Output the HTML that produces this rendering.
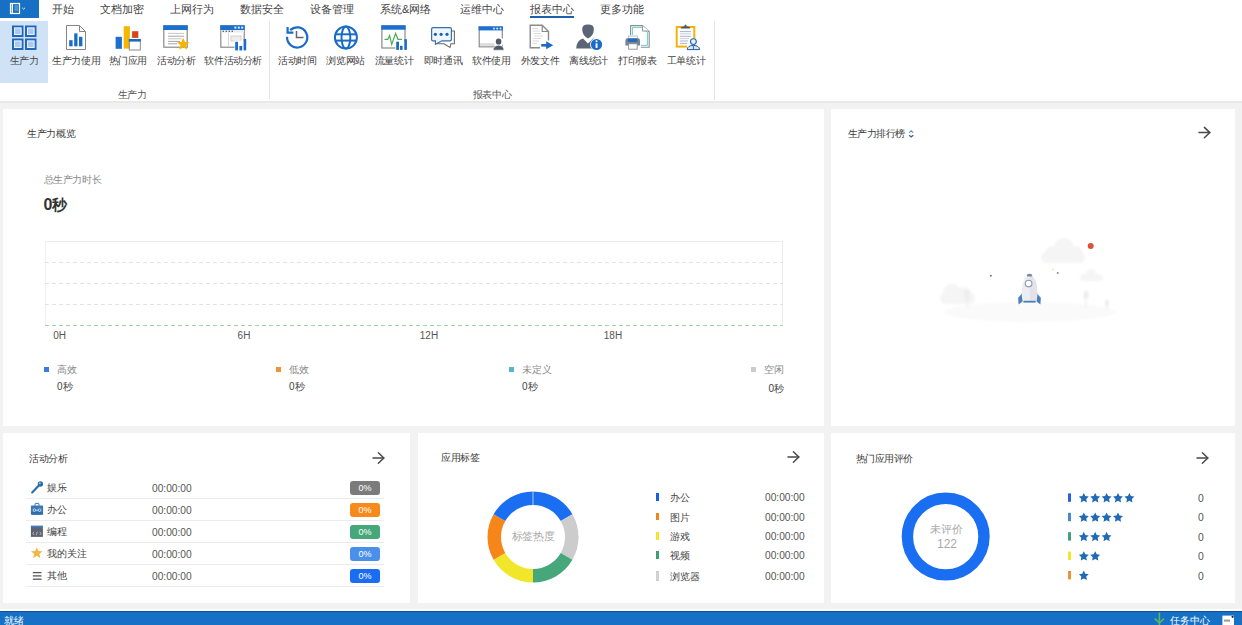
<!DOCTYPE html>
<html><head><meta charset="utf-8">
<style>
*{margin:0;padding:0;box-sizing:border-box}
html,body{width:1242px;height:625px;overflow:hidden;background:#f2f2f2;font-family:"Liberation Sans",sans-serif;color:#444}
.a{position:absolute}
.t{position:absolute;white-space:nowrap;line-height:1}
.c{text-align:center}
#top{position:absolute;left:0;top:0;width:1242px;height:103px;background:#fff;border-bottom:2px solid #e9e9e9}
.menu{font-size:11px;color:#444;top:4px}
.rl{font-size:10px;letter-spacing:-0.4px;color:#444;top:56px;width:100px;text-align:center}
.gl{font-size:10px;letter-spacing:-0.4px;color:#555;top:90px;width:100px;text-align:center}
.card{position:absolute;background:#fff}
.ttl{font-size:10px;color:#3c3c3c;letter-spacing:-0.3px}
.tm{font-family:"Liberation Sans",sans-serif;font-size:10.2px;color:#555}
.badge{position:absolute;left:350px;width:30px;height:14px;border-radius:3px;color:#fff;font-size:9px;line-height:14px;text-align:center}
.sep{position:absolute;left:26px;width:358px;height:1px;background:#ececec}
</style></head><body>
<div id="top">
  <div class="a" style="left:0;top:0;width:39px;height:18px;background:#1870c4"></div>
  <div class="a" style="left:0;top:21px;width:48px;height:62px;background:#cfe2f6"></div>
  <div class="t menu" style="left:52px">开始</div>
  <div class="t menu" style="left:100px">文档加密</div>
  <div class="t menu" style="left:170px">上网行为</div>
  <div class="t menu" style="left:240px">数据安全</div>
  <div class="t menu" style="left:310px">设备管理</div>
  <div class="t menu" style="left:380px">系统&amp;网络</div>
  <div class="t menu" style="left:460px">运维中心</div>
  <div class="t menu" style="left:530px">报表中心</div>
  <div class="t menu" style="left:600px">更多功能</div>
  <div class="a" style="left:530px;top:16px;width:44px;height:2px;background:#1f5fae"></div>

  <div class="a" style="left:269px;top:21px;width:1px;height:78px;background:#e4e4e4"></div>
  <div class="a" style="left:714px;top:21px;width:1px;height:79px;background:#e4e4e4"></div>

  <div class="t rl" style="left:-25.8px">生产力</div>
  <div class="t rl" style="left:26.2px">生产力使用</div>
  <div class="t rl" style="left:77.9px">热门应用</div>
  <div class="t rl" style="left:126.3px">活动分析</div>
  <div class="t rl" style="left:183.2px">软件活动分析</div>
  <div class="t rl" style="left:247.2px">活动时间</div>
  <div class="t rl" style="left:295.6px">浏览网站</div>
  <div class="t rl" style="left:344.1px">流量统计</div>
  <div class="t rl" style="left:393.1px">即时通讯</div>
  <div class="t rl" style="left:441.5px">软件使用</div>
  <div class="t rl" style="left:490px">外发文件</div>
  <div class="t rl" style="left:538.7px">离线统计</div>
  <div class="t rl" style="left:587.4px">打印报表</div>
  <div class="t rl" style="left:636px">工单统计</div>
  <div class="t gl" style="left:82px">生产力</div>
  <div class="t gl" style="left:442px">报表中心</div>
</div>


<svg class="a" style="left:0;top:0" width="1242" height="102" viewBox="0 0 1242 102">
 <!-- top-left app icon -->
 <g fill="none" stroke="#fff">
  <rect x="10.5" y="3.5" width="9" height="10" stroke-width="1.2"/>
  <line x1="12.3" y1="4" x2="12.3" y2="13" stroke-width="1.4"/>
  <line x1="14.5" y1="6" x2="18" y2="6" stroke-width="0.7" stroke-opacity="0.7"/>
  <line x1="14.5" y1="8" x2="18" y2="8" stroke-width="0.7" stroke-opacity="0.7"/>
  <line x1="14.5" y1="10" x2="18" y2="10" stroke-width="0.7" stroke-opacity="0.7"/>
  <polyline points="22.2,7.8 23.6,9.2 25,7.8" stroke-width="1" stroke-opacity="0.85"/>
 </g>
 <!-- grid icon -->
 <g stroke="#2368b8" stroke-width="2" fill="#a9c9ef">
  <rect x="13" y="26.5" width="9.5" height="9.5"/>
  <rect x="26" y="26.5" width="9.5" height="9.5"/>
  <rect x="13" y="39.5" width="9.5" height="9.5"/>
  <rect x="26" y="39.5" width="9.5" height="9.5"/>
 </g>
 <g stroke="#e6f2fd" stroke-width="1" fill="none">
  <rect x="14.5" y="28" width="6.5" height="6.5"/>
  <rect x="27.5" y="28" width="6.5" height="6.5"/>
  <rect x="14.5" y="41" width="6.5" height="6.5"/>
  <rect x="27.5" y="41" width="6.5" height="6.5"/>
 </g>
 <!-- productivity use doc -->
 <path d="M66.5,25.5 H79.5 L85.5,31.5 V49.5 H66.5 Z" fill="#fff" stroke="#858585" stroke-width="1"/>
 <path d="M79.5,25.5 V31.5 H85.5" fill="none" stroke="#858585" stroke-width="1"/>
 <g fill="#1a6bc4">
  <rect x="69.2" y="40.2" width="3.4" height="6.1"/>
  <rect x="74.2" y="33.4" width="3.3" height="12.9"/>
  <rect x="79" y="36.8" width="3.4" height="9.5"/>
 </g>
 <!-- hot apps -->
 <rect x="115.6" y="36.8" width="6.3" height="12" fill="#1a70cc"/>
 <rect x="123.7" y="26.2" width="6.2" height="22.4" fill="#f5b800"/>
 <rect x="132.1" y="31.2" width="6.2" height="6.7" fill="#d9421a"/>
 <rect x="129.3" y="39.5" width="11" height="10.5" fill="#fff" stroke="#8a8a8a" stroke-width="1"/>
 <rect x="128.8" y="39" width="12" height="2.6" fill="#1a6bc8"/>
 <!-- activity analysis -->
 <rect x="163.8" y="25.8" width="23.4" height="21.4" fill="#fff" stroke="#8a8a8a" stroke-width="1.2"/>
 <rect x="163.3" y="25.3" width="24.4" height="4.7" fill="#1a6fd0"/>
 <g stroke="#9a9a9a" stroke-width="0.9">
  <line x1="168" y1="33.4" x2="184" y2="33.4" stroke="#c0c0c0"/>
  <line x1="168" y1="36.2" x2="184" y2="36.2"/>
  <line x1="168" y1="38.8" x2="182" y2="38.8" stroke="#c0c0c0"/>
  <line x1="168" y1="41.4" x2="180" y2="41.4"/>
  <line x1="168" y1="43.8" x2="177" y2="43.8"/>
 </g>
 <path d="M183.2,37.8 L185,42 L189.4,42.2 L186,45.2 L187.1,49.8 L183.2,47.3 L179.3,49.8 L180.4,45.2 L177,42.2 L181.4,42 Z" fill="#f5b400"/>
 <!-- software activity analysis -->
 <rect x="220.8" y="25.8" width="23.4" height="21.4" fill="#fff" stroke="#8a8a8a" stroke-width="1.2"/>
 <rect x="220.3" y="25.3" width="24.4" height="4.7" fill="#1a6fd0"/>
 <g fill="#d8ecfb"><rect x="234.4" y="26.6" width="2" height="2"/><rect x="237.8" y="26.6" width="2" height="2"/><rect x="241.2" y="26.6" width="2" height="2"/></g>
 <rect x="221.4" y="30" width="22.4" height="2.6" fill="#ececec"/>
 <g fill="#666"><rect x="222.6" y="30.6" width="1.4" height="1.4"/><rect x="225.6" y="30.6" width="1.4" height="1.4"/><rect x="228.6" y="30.6" width="1.4" height="1.4"/><rect x="231.6" y="30.6" width="1.4" height="1.4"/></g>
 <line x1="228.5" y1="32.6" x2="228.5" y2="46.8" stroke="#d8d8d8" stroke-width="1"/>
 <rect x="231" y="36" width="10" height="5" fill="#eee" stroke="#d8c0c8" stroke-width="0.8"/>
 <rect x="234.6" y="40.6" width="13" height="10" fill="#fff"/>
 <g fill="#1a6bc8">
  <rect x="235.2" y="41.8" width="2.8" height="8.6"/>
  <rect x="239.4" y="46" width="2.8" height="4.4"/>
  <rect x="243.6" y="39" width="2.6" height="11.4"/>
 </g>
 <!-- activity time (clock) -->
 <path d="M287.1,36.8 A10.1,10.1 0 1 0 290.2,30.1" fill="none" stroke="#1a6bc8" stroke-width="2.2"/>
 <path d="M287.6,27 V32.6 H293.4" fill="none" stroke="#1a6bc8" stroke-width="2.2"/>
 <path d="M296.5,31 V37.5 H303.5" fill="none" stroke="#5f6676" stroke-width="1.5"/>
 <!-- globe -->
 <g fill="none" stroke="#1a6bc8" stroke-width="2">
  <circle cx="345.9" cy="37.6" r="11"/>
  <ellipse cx="345.9" cy="37.6" rx="4.4" ry="11"/>
  <line x1="335" y1="34.3" x2="356.8" y2="34.3"/>
  <line x1="335" y1="40.6" x2="356.8" y2="40.6"/>
 </g>
 <!-- traffic stats -->
 <rect x="381.9" y="25.9" width="23.1" height="22.1" fill="#fff" stroke="#8a8a8a" stroke-width="1.2"/>
 <rect x="381.3" y="25.3" width="24.3" height="4.4" fill="#1a6fd0"/>
 <polyline points="384.5,39.3 387.8,39.3 389.6,35.6 391.7,44.4 395.6,33.5 398,39.3 402,39.3" fill="none" stroke="#4caf50" stroke-width="1.2"/>
 <rect x="395.4" y="41" width="12.4" height="9.6" fill="#fff"/>
 <g fill="#1a6bc8">
  <rect x="396.2" y="41.7" width="2.8" height="8.2"/>
  <rect x="400" y="45.8" width="2.6" height="4.1"/>
  <rect x="404.3" y="39.2" width="2.6" height="10.7"/>
 </g>
 <!-- instant messaging -->
 <path d="M452,31 H454.4 V43.8 H451 L450,47.5 L444,43.8 H437" fill="#fff" stroke="#6a6a6a" stroke-width="1.1"/>
 <path d="M433,27.6 H450 Q451.4,27.6 451.4,29 V39.4 Q451.4,40.8 450,40.8 H442 L435.4,44.2 V40.8 H433 Q431.6,40.8 431.6,39.4 V29 Q431.6,27.6 433,27.6 Z" fill="#eef6fd" stroke="#3a6ea8" stroke-width="1.2"/>
 <g fill="#1a5fb0"><circle cx="435.4" cy="34.3" r="1.6"/><circle cx="441.1" cy="34.3" r="1.6"/><circle cx="447" cy="34.3" r="1.6"/></g>
 <!-- software use -->
 <rect x="479.2" y="27" width="23.1" height="19.8" fill="#fff" stroke="#8a8a8a" stroke-width="1.2"/>
 <rect x="478.6" y="26.4" width="24.3" height="4" fill="#1a6fd0"/>
 <g fill="#d8ecfb"><circle cx="494" cy="28.4" r="1"/><circle cx="497.2" cy="28.4" r="1"/><circle cx="500.5" cy="28.4" r="1"/></g>
 <rect x="480" y="43" width="15" height="3.2" fill="#dedede"/>
 <circle cx="498.6" cy="41.6" r="5.2" fill="#fff"/>
 <ellipse cx="498.6" cy="41.6" rx="2.8" ry="3.2" fill="#4f5a66"/>
 <path d="M493.2,50.2 Q493.4,45.6 498.6,45.2 Q503.8,45.6 504,50.2 Z" fill="#4f5a66" stroke="#fff" stroke-width="0.6"/>
 <!-- outgoing files -->
 <path d="M530.2,25.2 H542.2 L548.5,31.5 V47.8 H530.2 Z" fill="#fff" stroke="#8a8a8a" stroke-width="1.4"/>
 <path d="M542.2,25.2 V31.5 H548.5" fill="none" stroke="#8a8a8a" stroke-width="1.2"/>
 <g stroke="#d0d0d0" stroke-width="0.8"><line x1="532.5" y1="28.5" x2="538" y2="28.5"/><line x1="532.5" y1="31" x2="540" y2="31"/><line x1="533.5" y1="33.5" x2="541" y2="33.5"/><line x1="534" y1="36" x2="543" y2="36"/><line x1="533" y1="38.5" x2="541" y2="38.5"/><line x1="532.5" y1="41" x2="539" y2="41"/><line x1="532.5" y1="43.5" x2="537" y2="43.5"/></g>
 <rect x="540" y="40.5" width="14" height="9" fill="#fff"/>
 <line x1="541.2" y1="45.3" x2="550.5" y2="45.3" stroke="#1a6bc8" stroke-width="2.6"/>
 <path d="M546.2,41.3 L553.2,45.3 L546.2,49.3 Z" fill="#1a6bc8"/>
 <!-- offline stats -->
 <path d="M582.2,29 Q582.2,24.6 588,24.6 Q593.9,24.6 593.9,29 Q593.9,35.6 588,38.4 Q582.2,35.6 582.2,29 Z" fill="#5a6577"/>
 <path d="M576.2,48.4 Q576.6,40.6 583,38.6 L588,43.6 L593,38.6 Q596,39.6 597.6,42 L597.6,48.4 Z" fill="#5a6577"/>
 <circle cx="596.5" cy="44.5" r="6.4" fill="#fff"/>
 <circle cx="596.5" cy="44.5" r="5.6" fill="#1a6bc8"/>
 <rect x="595.6" y="43.3" width="1.9" height="4.6" fill="#fff"/>
 <circle cx="596.55" cy="41.2" r="1.05" fill="#fff"/>
 <!-- print report -->
 <path d="M630.6,25.6 H642.4 L649.2,31.6 V47.2 H630.6 Z" fill="#fff" stroke="#8a8f98" stroke-width="1.1"/>
 <path d="M632.4,27.4 H641.6 L647.4,32.4 V45.4 H632.4 Z" fill="none" stroke="#62d2c4" stroke-width="1"/>
 <path d="M642.4,25.6 V31 H649" fill="#fff" stroke="#8a8f98" stroke-width="1"/>
 <rect x="624.4" y="35.2" width="16.4" height="15" fill="#fff"/>
 <rect x="628.6" y="36" width="8.8" height="3" fill="#f6f6f6" stroke="#9aa" stroke-width="0.6"/>
 <path d="M625.4,40.4 Q625.4,38.2 627.6,38.2 H638 Q640,38.2 640,40.4 V45.4 H625.4 Z" fill="#7a8290"/>
 <rect x="627.8" y="38.6" width="9.6" height="3.2" fill="#1a6bc8"/>
 <rect x="628.6" y="43.8" width="8.6" height="5.4" fill="#fff" stroke="#8a8f98" stroke-width="0.9"/>
 <!-- work order stats -->
 <rect x="676.7" y="27" width="17.6" height="19.6" fill="#fff" stroke="#f5b20a" stroke-width="2"/>
 <path d="M680.5,28.5 Q680.8,26.6 683,26.6 H684.2 Q684.6,24.4 685.5,24.4 Q686.4,24.4 686.8,26.6 H688 Q690.2,26.6 690.2,28.5 Z" fill="#505868"/>
 <g stroke="#8890b0" stroke-width="0.7">
  <line x1="680" y1="31.6" x2="691" y2="31.6"/><line x1="680" y1="33.8" x2="691" y2="33.8" stroke="#b0b8d0"/>
  <line x1="680" y1="36.3" x2="691" y2="36.3"/><line x1="680" y1="38.6" x2="689" y2="38.6" stroke="#b0b8d0"/>
  <line x1="680" y1="41" x2="688" y2="41"/><line x1="680" y1="43.4" x2="688" y2="43.4"/>
 </g>
 <circle cx="693.4" cy="45" r="6.6" fill="#fff"/>
 <path d="M687.2,49.6 Q687.4,45.6 693.4,45.4 Q699.4,45.6 699.6,49.6 Z" fill="#d6ecfa" stroke="#2a5c9a" stroke-width="1"/>
 <line x1="693.4" y1="45.6" x2="693.4" y2="49.4" stroke="#2a6bc0" stroke-width="1"/>
 <circle cx="693.4" cy="41.6" r="2.9" fill="#e6f4fd" stroke="#1f64b8" stroke-width="1.1"/>
</svg>

<!-- cards -->
<div class="card" style="left:3px;top:109px;width:821px;height:317px"></div>
<div class="card" style="left:831px;top:109px;width:404px;height:317px"></div>
<div class="card" style="left:3px;top:433px;width:407px;height:170px"></div>
<div class="card" style="left:418px;top:433px;width:406px;height:170px"></div>
<div class="card" style="left:831px;top:433px;width:404px;height:170px"></div>


<!-- card1 content -->
<div class="t ttl" style="left:27px;top:129px">生产力概览</div>
<div class="t" style="left:43.5px;top:175px;font-size:10px;color:#888;letter-spacing:-0.35px">总生产力时长</div>
<div class="t" style="left:43.5px;top:197px;font-size:16px;font-weight:bold;color:#333">0<span style="font-size:15px;position:relative;top:-0.5px">秒</span></div>
<svg class="a" style="left:0;top:230px" width="830" height="100" viewBox="0 230 830 100">
 <line x1="45" y1="241.5" x2="783" y2="241.5" stroke="#ececec" stroke-width="1"/>
 <line x1="45.5" y1="241" x2="45.5" y2="325" stroke="#f0f0f0" stroke-width="1"/>
 <line x1="782.5" y1="241" x2="782.5" y2="325" stroke="#ececec" stroke-width="1"/>
 <g stroke="#e2e2e2" stroke-width="1" stroke-dasharray="4,3">
  <line x1="45" y1="262.5" x2="783" y2="262.5"/>
  <line x1="45" y1="283.5" x2="783" y2="283.5"/>
  <line x1="45" y1="304.5" x2="783" y2="304.5"/>
 </g>
 <line x1="45" y1="325.5" x2="783" y2="325.5" stroke="#9fd49f" stroke-width="1.2" stroke-dasharray="4,3"/>
</svg>
<div class="t c" style="left:9.7px;top:331px;width:100px;font-size:10px;color:#555">0H</div>
<div class="t c" style="left:194px;top:331px;width:100px;font-size:10px;color:#555">6H</div>
<div class="t c" style="left:379px;top:331px;width:100px;font-size:10px;color:#555">12H</div>
<div class="t c" style="left:563px;top:331px;width:100px;font-size:10px;color:#555">18H</div>
<div class="a" style="left:44px;top:367px;width:5px;height:5px;background:#3b7ddd"></div>
<div class="a" style="left:276px;top:367px;width:5px;height:5px;background:#f0923a"></div>
<div class="a" style="left:509px;top:367px;width:5px;height:5px;background:#5ab4cc"></div>
<div class="a" style="left:751px;top:367px;width:5px;height:5px;background:#cccccc"></div>
<div class="t" style="left:57px;top:365px;font-size:10px;color:#888">高效</div>
<div class="t" style="left:289px;top:365px;font-size:10px;color:#888">低效</div>
<div class="t" style="left:522px;top:365px;font-size:10px;color:#888">未定义</div>
<div class="t" style="left:764px;top:365px;font-size:10px;color:#888">空闲</div>
<div class="t" style="left:57px;top:382px;font-size:10px;color:#444">0秒</div>
<div class="t" style="left:289px;top:382px;font-size:10px;color:#444">0秒</div>
<div class="t" style="left:522px;top:382px;font-size:10px;color:#444">0秒</div>
<div class="t" style="left:768.5px;top:384px;font-size:10px;color:#444">0秒</div>


<!-- card2 content -->
<div class="t ttl" style="left:847.5px;top:129px;letter-spacing:-0.45px">生产力排行榜</div>
<svg class="a" style="left:905px;top:128px" width="12" height="12" viewBox="905 128 12 12">
 <polyline points="909.2,132.6 911.2,130.8 913.2,132.6" fill="none" stroke="#5a8ccc" stroke-width="1.1"/>
 <polyline points="909.2,135.2 911.2,137 913.2,135.2" fill="none" stroke="#3a5f8a" stroke-width="1.3"/>
</svg>
<svg class="a" style="left:1195px;top:124px" width="20" height="18" viewBox="1195 124 20 18">
 <g fill="none" stroke="#4a4a4a" stroke-width="1.5" stroke-linecap="round" stroke-linejoin="miter">
  <line x1="1199" y1="132.6" x2="1209.6" y2="132.6"/>
  <polyline points="1204.4,127.4 1209.8,132.6 1204.4,137.8"/>
 </g>
</svg>
<svg class="a" style="left:930px;top:225px" width="200" height="100" viewBox="930 225 200 100">
 <defs><filter id="bl" x="-20%" y="-20%" width="140%" height="140%"><feGaussianBlur stdDeviation="1.2"/></filter>
 <filter id="bl2"><feGaussianBlur stdDeviation="0.5"/></filter></defs>
 <g filter="url(#bl)">
 <ellipse cx="1030" cy="312" rx="86" ry="10" fill="#fafafa"/>
 <g fill="#f5f5f5">
  <circle cx="1053" cy="254" r="8"/><circle cx="1064" cy="248" r="10"/><circle cx="1075" cy="254" r="8"/><rect x="1041" y="252" width="44" height="11" rx="5.5"/>
  <circle cx="952" cy="293" r="9"/><circle cx="964" cy="295" r="8"/><rect x="940" y="292" width="35" height="12" rx="6"/>
  <circle cx="1091" cy="274" r="5"/><rect x="1080" y="274" width="23" height="7" rx="3.5"/>
 </g>
 <g fill="#eeeeee">
  <ellipse cx="967" cy="295" rx="3" ry="5.5"/><rect x="966.4" y="298" width="1.2" height="10"/>
  <ellipse cx="1086" cy="295" rx="2.6" ry="4.5"/><rect x="1085.4" y="298" width="1.2" height="10"/>
  <ellipse cx="1107" cy="303" rx="2.2" ry="3.6"/><rect x="1106.5" y="305" width="1" height="6"/>
 </g>
 </g>
 <g filter="url(#bl2)">
 <circle cx="1090.7" cy="246" r="3" fill="#d9533a"/>
 <circle cx="990.9" cy="275.7" r="1" fill="#777"/>
 <circle cx="1057.7" cy="273" r="1" fill="#888"/>
 <circle cx="1053" cy="269.5" r="1" fill="#ece6b0"/>
 <path d="M1022.4,293 L1018.2,297.8 L1018.6,304.6 L1023.4,300.8 Z" fill="#4a7fb8"/>
 <path d="M1036.6,293 L1040.8,297.8 L1040.4,304.6 L1035.6,300.8 Z" fill="#4a7fb8"/>
 <path d="M1029.5,273.4 Q1036.4,278 1037.2,289 Q1037.6,296 1036.4,301.6 H1022.6 Q1021.4,296 1021.8,289 Q1022.6,278 1029.5,273.4 Z" fill="#eaedf2"/>
 <path d="M1029.5,273.4 Q1036.4,278 1037.2,289 Q1037.6,296 1036.4,301.6 H1030 Z" fill="#e2e2e8"/>
 <path d="M1026.6,275 Q1029.5,272.6 1032.4,275 L1031.6,276.4 H1027.4 Z" fill="#7d88a8"/>
 <circle cx="1028.6" cy="283.6" r="3.3" fill="#fff" stroke="#8a98b0" stroke-width="1.1"/>
 <rect x="1023.4" y="300.8" width="12.2" height="1.8" fill="#4a7fb8"/>
 </g>
</svg>

<!-- card3 content -->
<div class="t ttl" style="left:29px;top:454px;letter-spacing:-0.5px">活动分析</div>
<svg class="a" style="left:368.5px;top:449px" width="20" height="18" viewBox="368.5 449 20 18"><g fill="none" stroke="#4a4a4a" stroke-width="1.5" stroke-linecap="round"><line x1="372.5" y1="458" x2="383.1" y2="458"/><polyline points="377.9,452.8 383.3,458 377.9,463.2"/></g></svg><div class="t" style="left:46.5px;top:482.6px;font-size:10px;color:#444">娱乐</div>
<div class="t tm" style="left:152px;top:484px">00:00:00</div>
<div class="badge" style="top:480.5px;background:#7b7b7b">0%</div>
<div class="sep" style="top:498px"></div>
<div class="t" style="left:46.5px;top:504.6px;font-size:10px;color:#444">办公</div>
<div class="t tm" style="left:152px;top:506px">00:00:00</div>
<div class="badge" style="top:502.5px;background:#f88a1c">0%</div>
<div class="sep" style="top:520px"></div>
<div class="t" style="left:46.5px;top:526.6px;font-size:10px;color:#444">编程</div>
<div class="t tm" style="left:152px;top:528px">00:00:00</div>
<div class="badge" style="top:524.5px;background:#45a77a">0%</div>
<div class="sep" style="top:542px"></div>
<div class="t" style="left:46.5px;top:548.6px;font-size:10px;color:#444">我的关注</div>
<div class="t tm" style="left:152px;top:550px">00:00:00</div>
<div class="badge" style="top:546.5px;background:#4a90ea">0%</div>
<div class="sep" style="top:564px"></div>
<div class="t" style="left:46.5px;top:570.6px;font-size:10px;color:#444">其他</div>
<div class="t tm" style="left:152px;top:572px">00:00:00</div>
<div class="badge" style="top:568.5px;background:#1a6df2">0%</div>
<div class="sep" style="top:586px"></div>
<svg class="a" style="left:26px;top:476px" width="22" height="112" viewBox="26 476 22 112">
 <line x1="32.2" y1="492.4" x2="38.6" y2="485.8" stroke="#2d6ea8" stroke-width="2.2" stroke-linecap="round"/>
 <circle cx="40.4" cy="484" r="2.7" fill="#2d6ea8"/>
 <circle cx="39.8" cy="483.3" r="1" fill="#8ab8e0"/>
 <rect x="30.9" y="505.6" width="12.2" height="9.3" rx="0.8" fill="#3b78b5"/>
 <path d="M35,505.8 V504 Q35,503.4 35.6,503.4 H38.4 Q39,503.4 39,504 V505.8" fill="none" stroke="#3b78b5" stroke-width="1"/>
 <line x1="31" y1="512.8" x2="43" y2="512.8" stroke="#2a5f99" stroke-width="0.8"/>
 <g fill="none" stroke="#d8e8f8" stroke-width="0.8"><circle cx="34.4" cy="510.2" r="1.3"/><circle cx="39.6" cy="510.2" r="1.3"/><line x1="35.8" y1="510.2" x2="38.2" y2="510.2"/></g>
 <rect x="30.9" y="525.8" width="12" height="11.1" fill="#5d6471"/>
 <rect x="30.9" y="525.8" width="12" height="1.6" fill="#3f7cc0"/>
 <g fill="none" stroke="#c8ccd4" stroke-width="0.8"><polyline points="34,531.8 32.8,533.4 34,535"/><polyline points="39.8,531.8 41,533.4 39.8,535"/><line x1="37.4" y1="531.6" x2="36.2" y2="535.2"/></g>
 <path d="M36.8,547.2 L38.4,551.1 L42.6,551.3 L39.4,554 L40.5,558.2 L36.8,555.8 L33.1,558.2 L34.2,554 L31,551.3 L35.2,551.1 Z" fill="#f0b848"/>
 <g stroke="#555" stroke-width="1.3"><line x1="32.8" y1="572.6" x2="41.5" y2="572.6"/><line x1="32.8" y1="575.9" x2="41.5" y2="575.9"/><line x1="32.8" y1="579.2" x2="41.5" y2="579.2"/></g>
</svg>
<!-- card4 content -->
<div class="t ttl" style="left:441px;top:452.5px;letter-spacing:-0.5px">应用标签</div>
<svg class="a" style="left:783.5px;top:447.6px" width="20" height="18" viewBox="783.5 447.6 20 18"><g fill="none" stroke="#4a4a4a" stroke-width="1.5" stroke-linecap="round"><line x1="787.5" y1="456.6" x2="798.1" y2="456.6"/><polyline points="792.9,451.40000000000003 798.3,456.6 792.9,461.8"/></g></svg><svg class="a" style="left:480px;top:484px" width="106" height="106" viewBox="480 484 106 106"><path d="M533.00,498.25 A38.75,38.75 0 0 1 566.56,517.62" fill="none" stroke="#1a6ef2" stroke-width="13.5"/><path d="M566.56,517.62 A38.75,38.75 0 0 1 566.56,556.38" fill="none" stroke="#cccccc" stroke-width="13.5"/><path d="M566.56,556.38 A38.75,38.75 0 0 1 533.00,575.75" fill="none" stroke="#45a77a" stroke-width="13.5"/><path d="M533.00,575.75 A38.75,38.75 0 0 1 499.44,556.38" fill="none" stroke="#f2e62a" stroke-width="13.5"/><path d="M499.44,556.38 A38.75,38.75 0 0 1 499.44,517.62" fill="none" stroke="#f7861a" stroke-width="13.5"/><path d="M499.44,517.62 A38.75,38.75 0 0 1 533.00,498.25" fill="none" stroke="#1a6ef2" stroke-width="13.5"/><line x1="533" y1="491" x2="533" y2="506" stroke="#fff" stroke-width="0.8" stroke-opacity="0.8"/></svg>
<div class="t c" style="left:483px;top:531px;width:100px;font-size:11px;color:#aaa;letter-spacing:-0.3px">标签热度</div>
<div class="a" style="left:656px;top:493.4px;width:2.5px;height:7.6px;background:#1a5fe0"></div>
<div class="t" style="left:669.5px;top:493.2px;font-size:10px;color:#444">办公</div>
<div class="t tm" style="left:765px;top:493.2px">00:00:00</div>
<div class="a" style="left:656px;top:512.7px;width:2.5px;height:7.6px;background:#f0851a"></div>
<div class="t" style="left:669.5px;top:512.5px;font-size:10px;color:#444">图片</div>
<div class="t tm" style="left:765px;top:512.5px">00:00:00</div>
<div class="a" style="left:656px;top:532px;width:2.5px;height:7.6px;background:#f2e62a"></div>
<div class="t" style="left:669.5px;top:531.8px;font-size:10px;color:#444">游戏</div>
<div class="t tm" style="left:765px;top:531.8px">00:00:00</div>
<div class="a" style="left:656px;top:551.4px;width:2.5px;height:7.6px;background:#3f9f72"></div>
<div class="t" style="left:669.5px;top:551.2px;font-size:10px;color:#444">视频</div>
<div class="t tm" style="left:765px;top:551.2px">00:00:00</div>
<div class="a" style="left:656px;top:570.7px;width:2.5px;height:10px;background:#d0d0d0"></div>
<div class="t" style="left:669.5px;top:571.7px;font-size:10px;color:#444">浏览器</div>
<div class="t tm" style="left:765px;top:571.7px">00:00:00</div>
<!-- card5 content -->
<div class="t ttl" style="left:855.5px;top:454px;letter-spacing:-0.45px">热门应用评价</div>
<svg class="a" style="left:1193px;top:449.4px" width="20" height="18" viewBox="1193 449.4 20 18"><g fill="none" stroke="#4a4a4a" stroke-width="1.5" stroke-linecap="round"><line x1="1197" y1="458.4" x2="1207.6" y2="458.4"/><polyline points="1202.4,453.2 1207.8,458.4 1202.4,463.59999999999997"/></g></svg><svg class="a" style="left:895px;top:486px" width="102" height="102" viewBox="895 486 102 102"><circle cx="945.7" cy="536.6" r="38.3" fill="none" stroke="#1a6ef2" stroke-width="11.4"/></svg>
<div class="t c" style="left:896px;top:524px;width:100px;font-size:11px;color:#aaa">未评价</div>
<div class="t c" style="left:897px;top:538px;width:100px;font-size:12px;color:#aaa">122</div>
<svg class="a" style="left:1060px;top:486px" width="160" height="100" viewBox="1060 486 160 100"><rect x="1068" y="493.4" width="3" height="8.4" fill="#2a5fd8"/><path transform="translate(1079.3,493.2)" d="M4.50,-0.20 L6.03,2.90 L9.45,3.39 L6.97,5.80 L7.56,9.21 L4.50,7.60 L1.44,9.21 L2.03,5.80 L-0.45,3.39 L2.97,2.90 Z" fill="#1f6bb5"/><path transform="translate(1090.7,493.2)" d="M4.50,-0.20 L6.03,2.90 L9.45,3.39 L6.97,5.80 L7.56,9.21 L4.50,7.60 L1.44,9.21 L2.03,5.80 L-0.45,3.39 L2.97,2.90 Z" fill="#1f6bb5"/><path transform="translate(1102.1,493.2)" d="M4.50,-0.20 L6.03,2.90 L9.45,3.39 L6.97,5.80 L7.56,9.21 L4.50,7.60 L1.44,9.21 L2.03,5.80 L-0.45,3.39 L2.97,2.90 Z" fill="#1f6bb5"/><path transform="translate(1113.5,493.2)" d="M4.50,-0.20 L6.03,2.90 L9.45,3.39 L6.97,5.80 L7.56,9.21 L4.50,7.60 L1.44,9.21 L2.03,5.80 L-0.45,3.39 L2.97,2.90 Z" fill="#1f6bb5"/><path transform="translate(1124.8999999999999,493.2)" d="M4.50,-0.20 L6.03,2.90 L9.45,3.39 L6.97,5.80 L7.56,9.21 L4.50,7.60 L1.44,9.21 L2.03,5.80 L-0.45,3.39 L2.97,2.90 Z" fill="#1f6bb5"/><rect x="1068" y="512.8" width="3" height="8.4" fill="#4a88d0"/><path transform="translate(1079.3,512.5999999999999)" d="M4.50,-0.20 L6.03,2.90 L9.45,3.39 L6.97,5.80 L7.56,9.21 L4.50,7.60 L1.44,9.21 L2.03,5.80 L-0.45,3.39 L2.97,2.90 Z" fill="#1f6bb5"/><path transform="translate(1090.7,512.5999999999999)" d="M4.50,-0.20 L6.03,2.90 L9.45,3.39 L6.97,5.80 L7.56,9.21 L4.50,7.60 L1.44,9.21 L2.03,5.80 L-0.45,3.39 L2.97,2.90 Z" fill="#1f6bb5"/><path transform="translate(1102.1,512.5999999999999)" d="M4.50,-0.20 L6.03,2.90 L9.45,3.39 L6.97,5.80 L7.56,9.21 L4.50,7.60 L1.44,9.21 L2.03,5.80 L-0.45,3.39 L2.97,2.90 Z" fill="#1f6bb5"/><path transform="translate(1113.5,512.5999999999999)" d="M4.50,-0.20 L6.03,2.90 L9.45,3.39 L6.97,5.80 L7.56,9.21 L4.50,7.60 L1.44,9.21 L2.03,5.80 L-0.45,3.39 L2.97,2.90 Z" fill="#1f6bb5"/><rect x="1068" y="532.2" width="3" height="8.4" fill="#3fa07a"/><path transform="translate(1079.3,531.9999999999999)" d="M4.50,-0.20 L6.03,2.90 L9.45,3.39 L6.97,5.80 L7.56,9.21 L4.50,7.60 L1.44,9.21 L2.03,5.80 L-0.45,3.39 L2.97,2.90 Z" fill="#1f6bb5"/><path transform="translate(1090.7,531.9999999999999)" d="M4.50,-0.20 L6.03,2.90 L9.45,3.39 L6.97,5.80 L7.56,9.21 L4.50,7.60 L1.44,9.21 L2.03,5.80 L-0.45,3.39 L2.97,2.90 Z" fill="#1f6bb5"/><path transform="translate(1102.1,531.9999999999999)" d="M4.50,-0.20 L6.03,2.90 L9.45,3.39 L6.97,5.80 L7.56,9.21 L4.50,7.60 L1.44,9.21 L2.03,5.80 L-0.45,3.39 L2.97,2.90 Z" fill="#1f6bb5"/><rect x="1068" y="551.6" width="3" height="8.4" fill="#f0e830"/><path transform="translate(1079.3,551.4)" d="M4.50,-0.20 L6.03,2.90 L9.45,3.39 L6.97,5.80 L7.56,9.21 L4.50,7.60 L1.44,9.21 L2.03,5.80 L-0.45,3.39 L2.97,2.90 Z" fill="#1f6bb5"/><path transform="translate(1090.7,551.4)" d="M4.50,-0.20 L6.03,2.90 L9.45,3.39 L6.97,5.80 L7.56,9.21 L4.50,7.60 L1.44,9.21 L2.03,5.80 L-0.45,3.39 L2.97,2.90 Z" fill="#1f6bb5"/><rect x="1068" y="571.0" width="3" height="8.4" fill="#e8943a"/><path transform="translate(1079.3,570.8)" d="M4.50,-0.20 L6.03,2.90 L9.45,3.39 L6.97,5.80 L7.56,9.21 L4.50,7.60 L1.44,9.21 L2.03,5.80 L-0.45,3.39 L2.97,2.90 Z" fill="#1f6bb5"/></svg>
<div class="t" style="left:1198px;top:493.9px;font-size:10.4px;color:#555">0</div>
<div class="t" style="left:1198px;top:513.3px;font-size:10.4px;color:#555">0</div>
<div class="t" style="left:1198px;top:532.7px;font-size:10.4px;color:#555">0</div>
<div class="t" style="left:1198px;top:552.1px;font-size:10.4px;color:#555">0</div>
<div class="t" style="left:1198px;top:571.5px;font-size:10.4px;color:#555">0</div>

<!-- status bar -->
<div class="a" style="left:0;top:609px;width:1242px;height:2px;background:#fafcff"></div>
<div class="a" style="left:0;top:611px;width:1242px;height:14px;background:#1670c6;border-top:1px solid #0f4f96"></div>
<div class="t" style="left:4px;top:616px;font-size:10px;color:#fff">就绪</div>
<div class="t" style="left:1170px;top:616px;font-size:10px;color:#fff">任务中心</div>
<svg class="a" style="left:1150px;top:611px" width="92" height="14" viewBox="1150 611 92 14">
 <g stroke="#5cb85c" stroke-width="1.6" fill="none"><line x1="1159.4" y1="612.5" x2="1159.4" y2="625"/><polyline points="1154.8,618.6 1159.4,623 1164,618.6"/></g>
 <rect x="1222.4" y="615.6" width="11.6" height="9.4" fill="#fff"/>
 <rect x="1224" y="619.6" width="6" height="2" fill="#999"/>
 <circle cx="1232.6" cy="616.8" r="1.1" fill="#222"/>
</svg>
</body></html>
